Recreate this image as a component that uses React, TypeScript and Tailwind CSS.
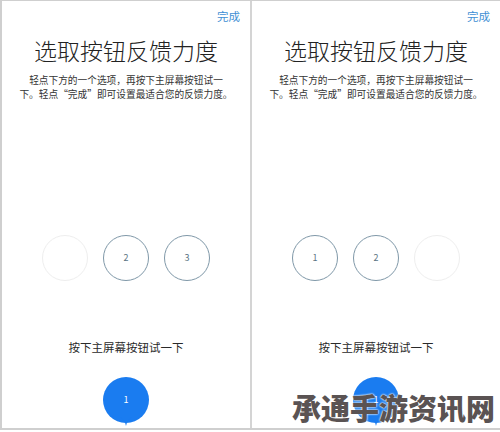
import React from "react";

const cjk = { fontFamily: '"Noto Sans CJK SC", "Noto Sans", sans-serif' };

function Ring({ label, faint }: { label?: string; faint?: boolean }) {
  return (
    <div
      className={
        "w-[46px] h-[46px] rounded-full flex items-center justify-center border " +
        (faint ? "border-[#eeeeee]" : "border-[#7f98a8]")
      }
    >
      {label && <span className="text-[9px] text-[#5b7484]">{label}</span>}
    </div>
  );
}

function Bubble() {
  return (
    <div className="relative w-[46px] h-[48px] flex flex-col items-center">
      <div className="w-[46px] h-[46px] rounded-full bg-[#1a7cf0] flex items-center justify-center">
        <span className="text-[9px] text-white">1</span>
      </div>
      <svg className="absolute left-[17px] top-[40px]" width="12" height="9" viewBox="0 0 12 9">
        <path d="M0 0 Q5 3 6 9 Q7 3 12 0 Z" fill="#1a7cf0" />
      </svg>
    </div>
  );
}

function Panel({ rings }: { rings: { label?: string; faint?: boolean }[] }) {
  return (
    <div className="w-[248px] h-full flex flex-col items-center bg-white" style={cjk}>
      <div className="w-full flex justify-end pr-[10px] pt-[7px]">
        <span className="text-[11.5px] leading-[16px] text-[#3f8fd4]">完成</span>
      </div>
      <h1 className="mt-[12px] text-[23px] leading-[28px] font-light text-[#222222]">选取按钮反馈力度</h1>
      <p className="mt-[9px] text-[9.7px] leading-[14px] text-[#333333] text-center">
        轻点下方的一个选项，再按下主屏幕按钮试一
        <br />
        下。轻点“完成”即可设置最适合您的反馈力度。
      </p>
      <div className="mt-[134px] flex gap-[15px]">
        {rings.map((r, i) => (
          <Ring key={i} label={r.label} faint={r.faint} />
        ))}
      </div>
      <p className="mt-[58px] text-[11.5px] leading-[16px] text-[#2a2a2a]">按下主屏幕按钮试一下</p>
      <div className="mt-[22px]">
        <Bubble />
      </div>
    </div>
  );
}

export default function App() {
  return (
    <div className="relative w-[500px] h-[432px] bg-white overflow-hidden">
      <div className="flex h-[430px] border-t border-b-2 border-l-2 border-[#cfcfcf] overflow-hidden">
        <Panel rings={[{ faint: true }, { label: "2" }, { label: "3" }]} />
        <div className="w-[2px] h-full bg-[#d4d4d4]" />
        <Panel rings={[{ label: "1" }, { label: "2" }, { faint: true }]} />
      </div>
      <div
        className="absolute left-[292px] top-[390px] text-[29px] leading-[34px] font-black text-[#5a5353] whitespace-nowrap"
        style={{ ...cjk, textShadow: "0 0 2px #ffffff, 0 0 2px #ffffff" }}
      >
        承通手游资讯网
      </div>
    </div>
  );
}
